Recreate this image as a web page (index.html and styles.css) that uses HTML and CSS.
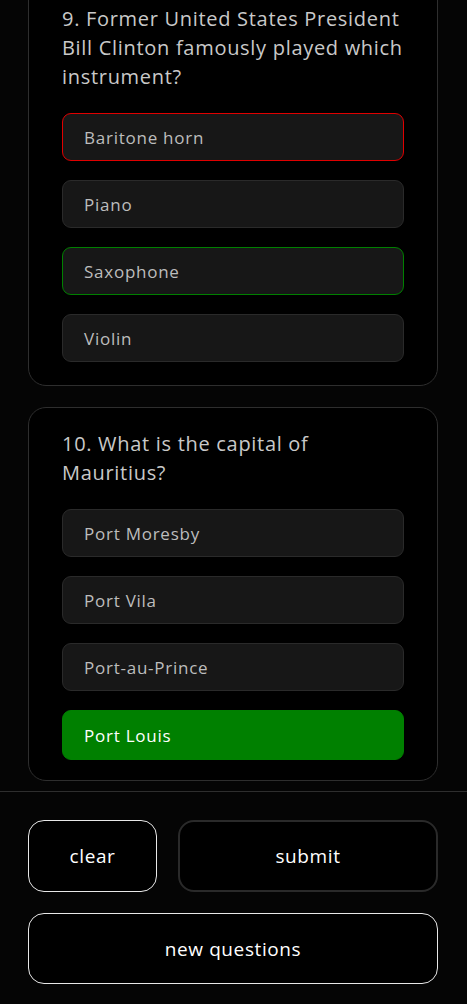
FILE: index.html
```html
<!DOCTYPE html>
<html lang="en">
<head>
<meta charset="utf-8">
<title>Quiz</title>
<link rel="stylesheet" href="styles.css">
</head>
<body>
<main class="page">
  <section class="quiz">
    <div class="card">
      <p class="question">9. Former United States President Bill Clinton famously played which instrument?</p>
      <div class="options">
        <div class="option wrong">Baritone horn</div>
        <div class="option">Piano</div>
        <div class="option right">Saxophone</div>
        <div class="option">Violin</div>
      </div>
    </div>
    <div class="card">
      <p class="question">10. What is the capital of Mauritius?</p>
      <div class="options">
        <div class="option">Port Moresby</div>
        <div class="option">Port Vila</div>
        <div class="option">Port-au-Prince</div>
        <div class="option selected">Port Louis</div>
      </div>
    </div>
  </section>
  <footer class="actions">
    <div class="row">
      <button class="btn btn-clear">clear</button>
      <button class="btn btn-submit">submit</button>
    </div>
    <button class="btn btn-new">new questions</button>
  </footer>
</main>
</body>
</html>
```

FILE: styles.css
```css
* { box-sizing: border-box; }
html, body { margin: 0; padding: 0; background: #050505; }
body {
  font-family: "Open Sans", "Liberation Sans", sans-serif;
  color: #c8c8c8;
  overflow: hidden;
  height: 1004px;
}
.page { margin-top: -18px; }
.quiz {
  display: flex;
  flex-direction: column;
  gap: 21px;
  padding: 0 29px 10px 28px;
}
.card {
  border: 1px solid #2e2e2e;
  border-radius: 18px;
  padding: 21px 33px 23px 33px;
  background: #000;
}
.card:last-child { padding-bottom: 20px; }
.question {
  margin: 0 0 22px 0;
  font-size: 20px;
  letter-spacing: 0.7px;
  line-height: 29px;
  color: #c9c9c9;
}
.options {
  display: flex;
  flex-direction: column;
  gap: 19px;
}
.option {
  height: 48px;
  border: 1px solid #2a2a2a;
  border-radius: 9px;
  background: #171717;
  padding: 0 21px;
  display: flex;
  align-items: center;
  font-size: 17px;
  letter-spacing: 0.75px;
  color: #bdbdbd;
}
.option.wrong { border-color: #e00000; }
.option.right { border-color: #008000; }
.option.selected { background: #008000; border-color: #008000; color: #fff; height: 50px; }
.actions {
  border-top: 1px solid #2e2e2e;
  padding: 28px 29px 0 28px;
  display: flex;
  flex-direction: column;
  gap: 21px;
}
.row { display: flex; gap: 21px; }
.btn {
  font-family: inherit;
  font-size: 19px;
  letter-spacing: 0.6px;
  color: #fff;
  background: #000;
  border: 1px solid #e8e8e8;
  border-radius: 16px;
  height: 72px;
  cursor: pointer;
}
.btn-clear { width: 129px; }
.btn-submit { flex: 1; border: 2px solid #2a2a2a; }
.btn-new { width: 100%; height: 71px; }
```
